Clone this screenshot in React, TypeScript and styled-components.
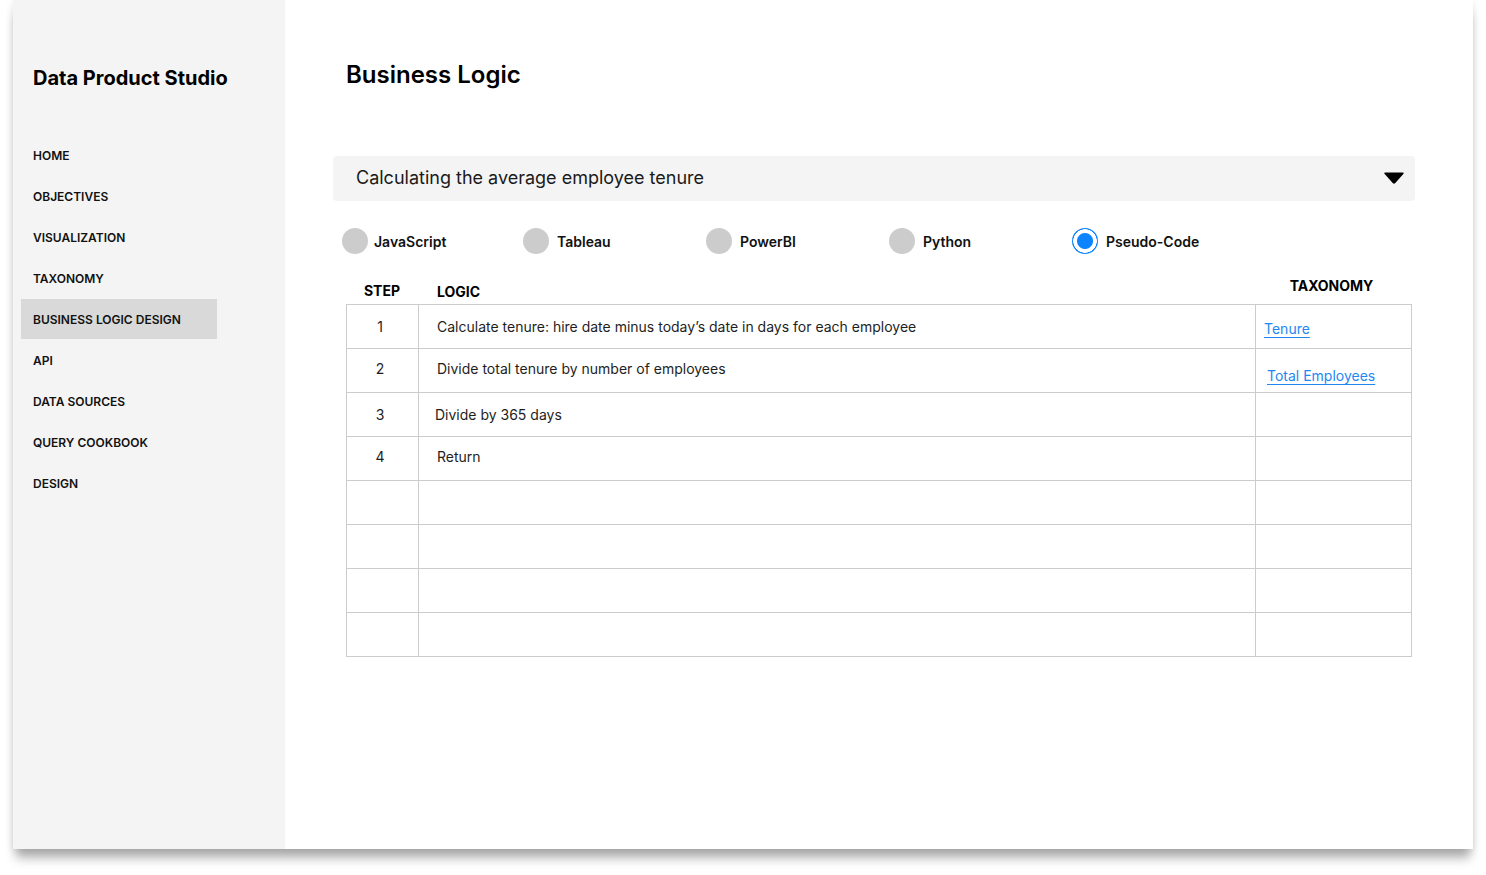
import React from "react";
import styled, { createGlobalStyle } from "styled-components";

const GlobalStyle = createGlobalStyle`
    html, body {
        margin: 0;
        padding: 0;
        background: #fff;
    }
    body {
        font-family: Inter, "Noto Sans", "Liberation Sans", sans-serif;
        color: #111;
    }
`;

const navItems = [
    "HOME",
    "OBJECTIVES",
    "VISUALIZATION",
    "TAXONOMY",
    "BUSINESS LOGIC DESIGN",
    "API",
    "DATA SOURCES",
    "QUERY COOKBOOK",
    "DESIGN",
];

const languages = ["JavaScript", "Tableau", "PowerBI", "Python", "Pseudo-Code"];

type Step = {
    step?: string;
    logic?: string;
    link?: string;
    textShift?: number;
    linkShift?: number;
    logicIndent?: number;
    linkIndent?: number;
};

const steps: Step[] = [
    {
        step: "1",
        logic: "Calculate tenure: hire date minus today’s date in days for each employee",
        link: "Tenure",
        textShift: 0,
        linkShift: 4,
    },
    {
        step: "2",
        logic: "Divide total tenure by number of employees",
        link: "Total Employees",
        textShift: -4,
        linkShift: 10,
        linkIndent: 11,
    },
    { step: "3", logic: "Divide by 365 days", logicIndent: 16 },
    { step: "4", logic: "Return", textShift: -4 },
    {},
    {},
    {},
    {},
];

const App = () => {
    return (
        <>
            <GlobalStyle />
            <Page>
                <Frame>
                    <Sidebar>
                        <Brand>Data Product Studio</Brand>
                        <Nav>
                            {navItems.map((item) => (
                                <NavItem key={item} $active={item === "BUSINESS LOGIC DESIGN"}>
                                    {item}
                                </NavItem>
                            ))}
                        </Nav>
                    </Sidebar>
                    <Main>
                        <Heading>Business Logic</Heading>
                        <Select>
                            <span>Calculating the average employee tenure</span>
                            <svg width="20" height="12" viewBox="0 0 20 12">
                                <path d="M1 1.2 L19 1.2 L10.8 10.6 Q10 11.4 9.2 10.6 Z" fill="#000" stroke="#000" strokeWidth="1.4" strokeLinejoin="round" />
                            </svg>
                        </Select>
                        <RadioRow>
                            {languages.map((lang) => (
                                <RadioOption key={lang}>
                                    <RadioDot $checked={lang === "Pseudo-Code"} />
                                    <RadioLabel>{lang}</RadioLabel>
                                </RadioOption>
                            ))}
                        </RadioRow>
                        <TableWrap>
                            <HeaderRow>
                                <HeadCell $lift={0} $align="center" $trim={0}>STEP</HeadCell>
                                <HeadCell $lift={-1} $align="left" $trim={0}>LOGIC</HeadCell>
                                <HeadCell $lift={5} $align="center" $trim={3}>TAXONOMY</HeadCell>
                            </HeaderRow>
                            <Grid>
                                {steps.map((row, i) => (
                                    <React.Fragment key={i}>
                                        <StepCell $shift={row.textShift ?? 0}>{row.step}</StepCell>
                                        <LogicCell $shift={row.textShift ?? 0} $indent={row.logicIndent ?? 18}>
                                            {row.logic}
                                        </LogicCell>
                                        <TaxCell $shift={row.linkShift ?? 0} $indent={row.linkIndent ?? 8}>
                                            {row.link && <TaxLink href="#">{row.link}</TaxLink>}
                                        </TaxCell>
                                    </React.Fragment>
                                ))}
                            </Grid>
                        </TableWrap>
                    </Main>
                </Frame>
            </Page>
        </>
    );
};

const Page = styled.div`
    width: 1486px;
    height: 875px;
    padding: 0 13px;
    box-sizing: border-box;
    overflow: hidden;
`;

const Frame = styled.div`
    display: flex;
    height: 849px;
    background: #fff;
    box-shadow: 0 12px 10px -3px rgba(0, 0, 0, 0.3), 0 2px 8px rgba(0, 0, 0, 0.1);
`;

const Sidebar = styled.aside`
    width: 272px;
    flex-shrink: 0;
    background: #f4f4f4;
    padding-left: 8px;
    box-sizing: border-box;
`;

const Brand = styled.h1`
    margin: 66px 0 0 12px;
    font-size: 20px;
    line-height: 24px;
    font-weight: 700;
    color: #000;
`;

const Nav = styled.nav`
    display: flex;
    flex-direction: column;
    gap: 1px;
    margin-top: 45px;
`;

const NavItem = styled.div<{ $active: boolean }>`
    display: flex;
    align-items: center;
    width: 196px;
    height: 40px;
    padding-left: 12px;
    box-sizing: border-box;
    font-size: 12px;
    font-weight: 600;
    color: #111;
    background: ${({ $active }) => ($active ? "#d9d9d9" : "transparent")};
`;

const Main = styled.main`
    flex: 1;
    padding: 60px 59px 0 48px;
    display: flex;
    flex-direction: column;
`;

const Heading = styled.h2`
    margin: 0 0 0 13px;
    font-size: 24px;
    line-height: 30px;
    font-weight: 600;
    color: #000;
`;

const Select = styled.div`
    display: flex;
    align-items: center;
    justify-content: space-between;
    height: 45px;
    margin-top: 66px;
    padding: 0 11px 2px 23px;
    box-sizing: border-box;
    background: #f4f4f4;
    border-radius: 4px;
    font-size: 18px;
    color: #1a1a1a;
`;

const RadioRow = styled.div`
    display: flex;
    margin: 27px 0 0 9px;
`;

const RadioOption = styled.label`
    display: flex;
    align-items: center;
    gap: 8px;
    width: 183px;

    &:first-child {
        gap: 6px;
        width: 181px;
    }
`;

const RadioDot = styled.span<{ $checked: boolean }>`
    width: 26px;
    height: 26px;
    border-radius: 50%;
    box-sizing: border-box;
    background: ${({ $checked }) =>
        $checked ? "radial-gradient(circle, #0d84ff 0 7.5px, #fff 8.5px 11.5px, #0d84ff 12px)" : "#cccccc"};
`;

const RadioLabel = styled.span`
    font-size: 14px;
    font-weight: 600;
    color: #111;
`;

const TableWrap = styled.div`
    margin: 0 3px 0 13px;
`;

const columns = "72px 837px 156px";

const HeaderRow = styled.div`
    display: grid;
    grid-template-columns: ${columns};
    height: 50px;
    align-items: end;
`;

const HeadCell = styled.div<{ $lift: number; $align: string; $trim: number }>`
    padding-bottom: ${({ $lift }) => 5 + $lift}px;
    padding-left: ${({ $align }) => ($align === "left" ? "19px" : "0")};
    padding-right: ${({ $trim }) => $trim}px;
    text-align: ${({ $align }) => $align};
    font-size: 14px;
    font-weight: 700;
    color: #000;
`;

const Grid = styled.div`
    display: grid;
    grid-template-columns: ${columns};
    grid-auto-rows: 44px;
    border-top: 1px solid #cccccc;
    border-left: 1px solid #cccccc;
`;

const Cell = styled.div<{ $shift: number }>`
    display: flex;
    align-items: center;
    border-right: 1px solid #cccccc;
    border-bottom: 1px solid #cccccc;
    padding-top: ${({ $shift }) => ($shift > 0 ? $shift : 0)}px;
    padding-bottom: ${({ $shift }) => ($shift < 0 ? -$shift : 0)}px;
    font-size: 14px;
    color: #1e1e1e;
    box-sizing: border-box;
    min-width: 0;
`;

const StepCell = styled(Cell)`
    justify-content: center;
    padding-right: 5px;
`;

const LogicCell = styled(Cell)<{ $indent: number }>`
    padding-left: ${({ $indent }) => $indent}px;
`;

const TaxCell = styled(Cell)<{ $indent: number }>`
    padding-left: ${({ $indent }) => $indent}px;
`;

const TaxLink = styled.a`
    color: #1e88f0;
    text-decoration: underline;
    text-underline-offset: 3px;
    font-size: 14px;
`;

export default App;
